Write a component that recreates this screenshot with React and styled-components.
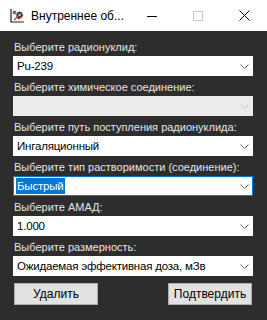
import React from "react";
import styled, { createGlobalStyle } from "styled-components";

const GlobalStyle = createGlobalStyle`
  html, body {
    margin: 0;
    padding: 0;
    background: #2b2b2b;
  }
  * {
    box-sizing: border-box;
  }
`;

const fields = [
  { label: "Выберите радионуклид:", value: "Pu-239" },
  { label: "Выберите химическое соединение:", value: "", disabled: true },
  { label: "Выберите путь поступления радионуклида:", value: "Ингаляционный" },
  { label: "Выберите тип растворимости (соединение):", value: "Быстрый", focused: true },
  { label: "Выберите АМАД:", value: "1.000" },
  { label: "Выберите размерность:", value: "Ожидаемая эффективная доза, мЗв" },
];

const App = () => {
  return (
    <Window>
      <GlobalStyle />
      <TitleBar>
        <AppIcon />
        <Title>Внутреннее об...</Title>
        <Controls>
          <CtrlButton>
            <svg width="10" height="10" viewBox="0 0 10 10">
              <path d="M0 5.5h10" stroke="#000" strokeWidth="1" />
            </svg>
          </CtrlButton>
          <CtrlButton>
            <svg width="10" height="10" viewBox="0 0 10 10">
              <rect x="0.5" y="0.5" width="9" height="9" fill="none" stroke="#c8c8c8" />
            </svg>
          </CtrlButton>
          <CtrlButton>
            <svg width="11" height="11" viewBox="0 0 11 11">
              <path d="M0.5 0.5l10 10M10.5 0.5l-10 10" stroke="#000" strokeWidth="1" />
            </svg>
          </CtrlButton>
        </Controls>
      </TitleBar>
      <Content>
        {fields.map((f) => (
          <Field key={f.label}>
            <Label>{f.label}</Label>
            <Select $disabled={f.disabled} $focused={f.focused}>
              <Value $selected={f.focused}>{f.value}</Value>
              <Chevron $disabled={f.disabled} />
            </Select>
          </Field>
        ))}
        <Buttons>
          <Button>Удалить</Button>
          <Button>Подтвердить</Button>
        </Buttons>
      </Content>
    </Window>
  );
};

const AppIcon = () => (
  <IconBox>
    <svg width="15" height="15" viewBox="0 0 15 15">
      <path d="M1 1v13h13" fill="none" stroke="#222" strokeWidth="1.2" />
      <path d="M3 3l3 3M6 3l-3 3" stroke="#c0282d" strokeWidth="1.4" />
      <circle cx="9.5" cy="7" r="3.2" fill="#333" />
      <path d="M8 5.5l3 3M11 5.5l-3 3" stroke="#fff" strokeWidth="0.9" />
      <path d="M4 12l3-3 2 2 4-4" fill="none" stroke="#c0282d" strokeWidth="1.1" />
    </svg>
  </IconBox>
);

const Chevron = ({ $disabled }) => (
  <ChevronBox>
    <svg width="9" height="5" viewBox="0 0 9 5">
      <path
        d="M0.5 0.5l4 4 4-4"
        fill="none"
        stroke={$disabled ? "#c4c4c4" : "#606060"}
        strokeWidth="1"
      />
    </svg>
  </ChevronBox>
);

export default App;

const Window = styled.div`
  width: 267px;
  height: 320px;
  background: #2d2d2d;
  font-family: "Liberation Sans", Arial, sans-serif;
  display: flex;
  flex-direction: column;
  overflow: hidden;
`;

const TitleBar = styled.div`
  height: 31px;
  background: #fff;
  display: flex;
  align-items: center;
  padding-left: 10px;
`;

const IconBox = styled.div`
  width: 15px;
  height: 15px;
  display: flex;
`;

const Title = styled.div`
  margin-left: 6px;
  font-size: 12px;
  color: #000;
  flex: 1;
  white-space: nowrap;
`;

const Controls = styled.div`
  display: flex;
  height: 100%;
`;

const CtrlButton = styled.div`
  width: 46px;
  height: 100%;
  display: flex;
  align-items: center;
  justify-content: center;
`;

const Content = styled.div`
  padding: 5px 14px 0 13px;
  display: flex;
  flex-direction: column;
`;

const Field = styled.div`
  display: flex;
  flex-direction: column;
`;

const Label = styled.div`
  height: 20px;
  display: flex;
  align-items: flex-end;
  padding-bottom: 3px;
  padding-left: 1px;
  font-size: 11px;
  color: #e6e6e6;
  white-space: nowrap;
`;

const Select = styled.div`
  height: 20px;
  display: flex;
  align-items: center;
  background: ${(p) => (p.$disabled ? "#ececec" : "#fff")};
  border: 1px solid ${(p) => (p.$focused ? "#0078d7" : p.$disabled ? "#ececec" : "#fff")};
  padding-left: 2px;
`;

const Value = styled.span`
  font-size: 11.5px;
  line-height: 16px;
  letter-spacing: -0.2px;
  color: ${(p) => (p.$selected ? "#fff" : "#000")};
  background: ${(p) => (p.$selected ? "#0078d7" : "transparent")};
  white-space: nowrap;
  overflow: hidden;
  padding: 0 1px;
`;

const ChevronBox = styled.div`
  width: 16px;
  display: flex;
  align-items: center;
  justify-content: center;
  margin-left: auto;
`;

const Buttons = styled.div`
  display: flex;
  justify-content: space-between;
  margin-top: 7px;
  padding: 0 1px;
`;

const Button = styled.button`
  width: 84px;
  height: 22px;
  background: #e1e1e1;
  border: 1px solid #adadad;
  font-family: "Liberation Sans", Arial, sans-serif;
  font-size: 12px;
  color: #000;
  padding: 0;
`;
